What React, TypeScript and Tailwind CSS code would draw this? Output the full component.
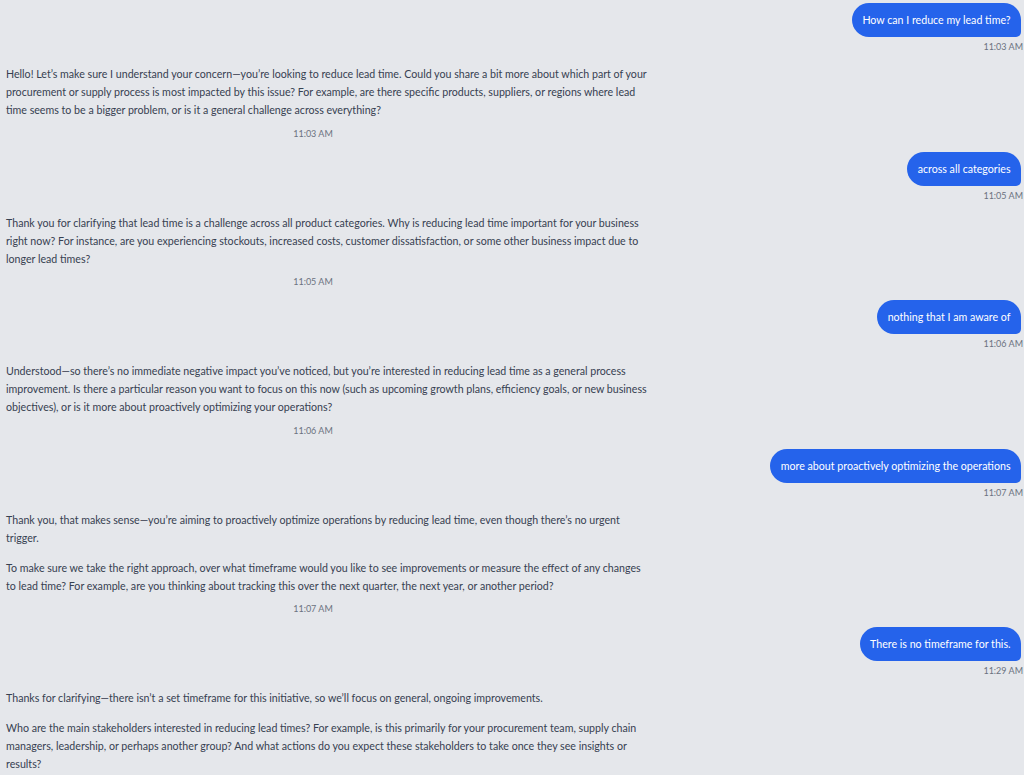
import React from "react";

type Msg =
  | { role: "user"; text: string; time: string }
  | { role: "assistant"; paras: string[]; time: string };

const messages: Msg[] = [
  { role: "user", text: "How can I reduce my lead time?", time: "11:03 AM" },
  {
    role: "assistant",
    paras: [
      "Hello! Let’s make sure I understand your concern—you’re looking to reduce lead time. Could you share a bit more about which part of your procurement or supply process is most impacted by this issue? For example, are there specific products, suppliers, or regions where lead time seems to be a bigger problem, or is it a general challenge across everything?",
    ],
    time: "11:03 AM",
  },
  { role: "user", text: "across all categories", time: "11:05 AM" },
  {
    role: "assistant",
    paras: [
      "Thank you for clarifying that lead time is a challenge across all product categories. Why is reducing lead time important for your business right now? For instance, are you experiencing stockouts, increased costs, customer dissatisfaction, or some other business impact due to longer lead times?",
    ],
    time: "11:05 AM",
  },
  { role: "user", text: "nothing that I am aware of", time: "11:06 AM" },
  {
    role: "assistant",
    paras: [
      "Understood—so there’s no immediate negative impact you’ve noticed, but you’re interested in reducing lead time as a general process improvement. Is there a particular reason you want to focus on this now (such as upcoming growth plans, efficiency goals, or new business objectives), or is it more about proactively optimizing your operations?",
    ],
    time: "11:06 AM",
  },
  { role: "user", text: "more about proactively optimizing the operations", time: "11:07 AM" },
  {
    role: "assistant",
    paras: [
      "Thank you, that makes sense—you’re aiming to proactively optimize operations by reducing lead time, even though there’s no urgent trigger.",
      "To make sure we take the right approach, over what timeframe would you like to see improvements or measure the effect of any changes to lead time? For example, are you thinking about tracking this over the next quarter, the next year, or another period?",
    ],
    time: "11:07 AM",
  },
  { role: "user", text: "There is no timeframe for this.", time: "11:29 AM" },
  {
    role: "assistant",
    paras: [
      "Thanks for clarifying—there isn’t a set timeframe for this initiative, so we’ll focus on general, ongoing improvements.",
      "Who are the main stakeholders interested in reducing lead times? For example, is this primarily for your procurement team, supply chain managers, leadership, or perhaps another group? And what actions do you expect these stakeholders to take once they see insights or results?",
    ],
    time: "11:29 AM",
  },
];

export default function App() {
  return (
    <div className="h-[775px] w-full overflow-hidden bg-[#e5e7eb] pt-[3px] pl-[6px] pr-[1px] font-['Lato','Liberation_Sans',sans-serif]">
      <div className="flex flex-col gap-[12px]">
        {messages.map((m, i) =>
          m.role === "user" ? (
            <div key={i} className="flex flex-col items-end">
              <div className="mr-[2px] rounded-[17px] rounded-br-[5px] bg-[#2563eb] px-[10.5px] py-[8px] text-[10.65px] leading-[18px] text-white">
                {m.text}
              </div>
              <div className="mt-[3px] text-[9px] leading-[13px] text-[#6b7280]">{m.time}</div>
            </div>
          ) : (
            <div key={i} className="flex flex-col items-start">
              <div className="flex w-[643px] flex-col gap-[12px] text-[10.65px] leading-[18px] text-[#374151]">
                {m.paras.map((p, j) => (
                  <p key={j}>{p}</p>
                ))}
              </div>
              <div className="mt-[7.5px] w-[614px] text-center text-[9px] leading-[13px] text-[#6b7280]">
                {m.time}
              </div>
            </div>
          )
        )}
      </div>
    </div>
  );
}
